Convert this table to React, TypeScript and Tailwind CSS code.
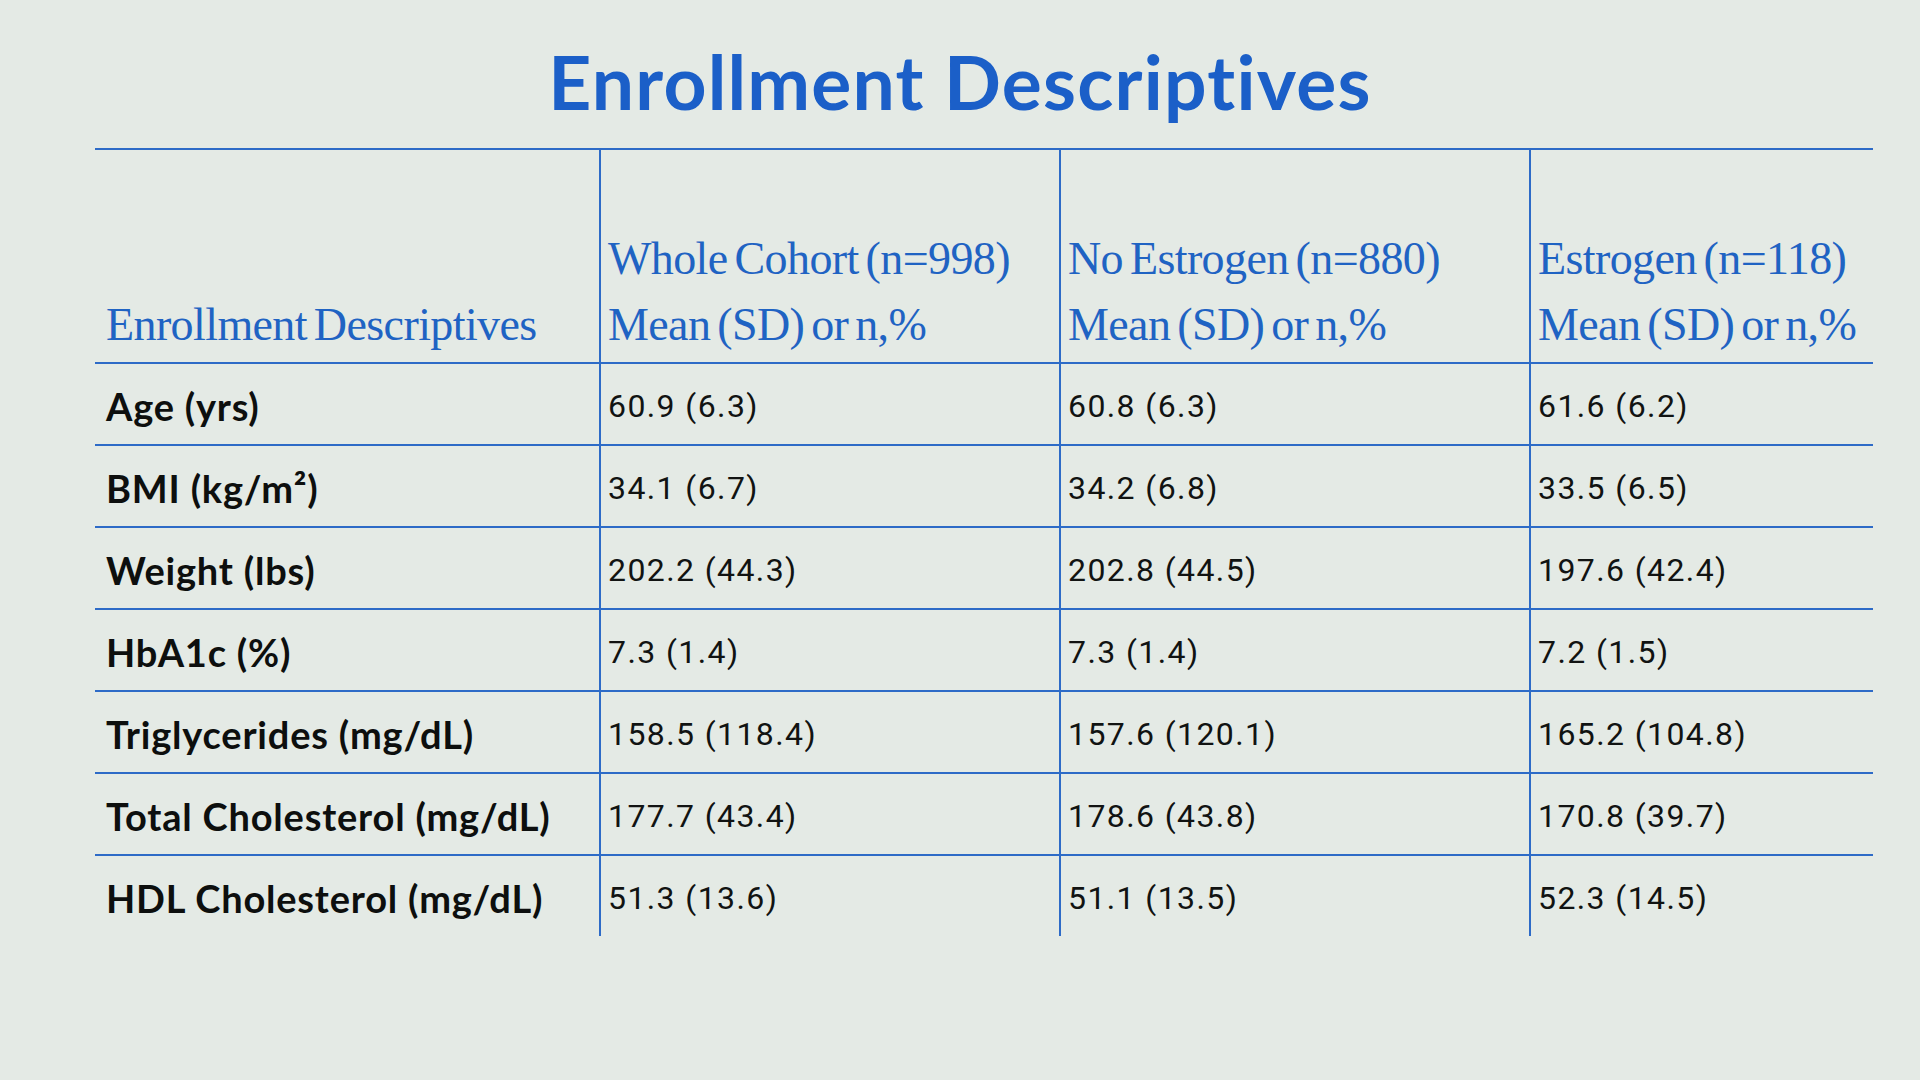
import React from "react";

const rows: [string, string, string, string][] = [
  ["Age (yrs)", "60.9 (6.3)", "60.8 (6.3)", "61.6 (6.2)"],
  ["BMI (kg/m²)", "34.1 (6.7)", "34.2 (6.8)", "33.5 (6.5)"],
  ["Weight (lbs)", "202.2 (44.3)", "202.8 (44.5)", "197.6 (42.4)"],
  ["HbA1c (%)", "7.3 (1.4)", "7.3 (1.4)", "7.2 (1.5)"],
  ["Triglycerides (mg/dL)", "158.5 (118.4)", "157.6 (120.1)", "165.2 (104.8)"],
  ["Total Cholesterol (mg/dL)", "177.7 (43.4)", "178.6 (43.8)", "170.8 (39.7)"],
  ["HDL Cholesterol (mg/dL)", "51.3 (13.6)", "51.1 (13.5)", "52.3 (14.5)"],
];

const headers: [string, string][] = [
  ["Whole Cohort (n=998)", "Mean (SD) or n,%"],
  ["No Estrogen (n=880)", "Mean (SD) or n,%"],
  ["Estrogen (n=118)", "Mean (SD) or n,%"],
];

const headText =
  "font-['Liberation_Serif',serif] text-[46px] leading-[66px] text-[#1f63c3] tracking-[-0.6px] [word-spacing:-4px] whitespace-nowrap";

export default function App() {
  return (
    <div className="w-[1920px] h-[1080px] bg-[#e4eae5] overflow-hidden">
      <h1 className="pt-[36px] h-[148px] text-center text-[75px] leading-[90px] font-bold text-[#1b5fc8] font-['Lato',sans-serif] tracking-[1.2px]">
        Enrollment Descriptives
      </h1>
      <div className="ml-[95px] w-[1778px] grid grid-cols-[504px_460px_470px_344px] border-t-2 border-[#2d6bc7]">
        {/* header */}
        <div className="h-[212px] flex flex-col justify-end pl-[11px] pb-[4px]">
          <div className={headText}>Enrollment Descriptives</div>
        </div>
        {headers.map((h, i) => (
          <div
            key={i}
            className="h-[212px] flex flex-col justify-end pl-[7px] pb-[4px] border-l-2 border-[#2d6bc7]"
          >
            <div className={headText}>{h[0]}</div>
            <div className={headText}>{h[1]}</div>
          </div>
        ))}
        {rows.map((r, ri) => (
          <React.Fragment key={ri}>
            <div className="h-[82px] flex items-center pl-[11px] pt-[4px] border-t-2 border-[#2d6bc7] font-['Lato',sans-serif] font-bold text-[38px] tracking-[0.8px] text-[#0d0f0e] whitespace-nowrap">
              {r[0]}
            </div>
            {r.slice(1).map((v, ci) => (
              <div
                key={ci}
                className="h-[82px] flex items-center pl-[7px] pt-[4px] border-t-2 border-l-2 border-[#2d6bc7] font-['Roboto',sans-serif] text-[32px] tracking-[1.4px] text-[#111312] whitespace-nowrap"
              >
                {v}
              </div>
            ))}
          </React.Fragment>
        ))}
      </div>
    </div>
  );
}
